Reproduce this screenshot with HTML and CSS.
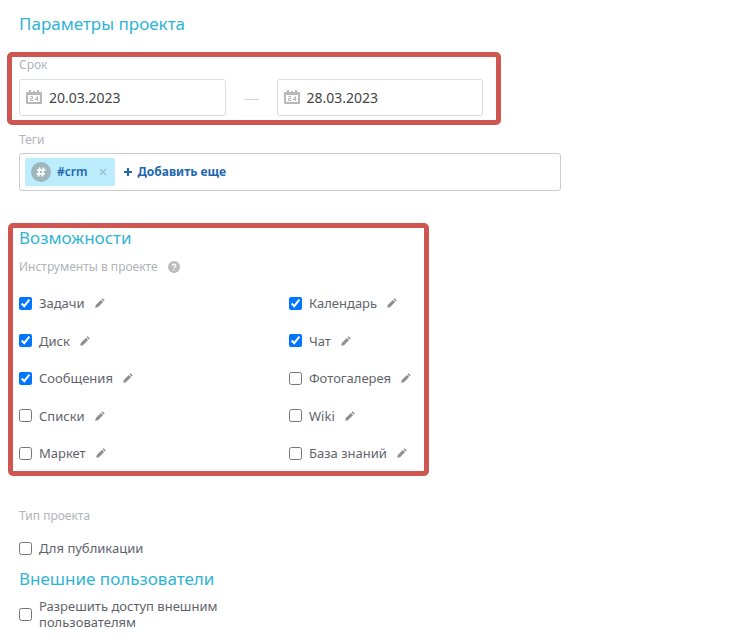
FILE: index.html
```html
<!DOCTYPE html>
<html lang="ru">
<head>
<meta charset="utf-8">
<title>Параметры проекта</title>
<meta name="viewport" content="width=device-width, initial-scale=1">
<link rel="stylesheet" href="styles.css">
</head>
<body>
<svg class="defs" aria-hidden="true">
  <symbol id="pencil" viewBox="0 0 10 10">
    <path d="M7.600 .3 9.700 2.400 8.700 3.500 6.500 1.300zM5.900 1.900 8.100 4.100 3 9.200 .2 9.800 .8 7z"/>
  </symbol>
  <symbol id="calendar" viewBox="0 0 16 15">
    <path fill-rule="evenodd" d="M1 2h14a1 1 0 0 1 1 1v10a1 1 0 0 1-1 1H1a1 1 0 0 1-1-1V3a1 1 0 0 1 1-1zM2 5v7h12V5z"/>
    <path d="M3 0h2v3H3zM11 0h2v3h-2zM7 1h2v2H7z"/>
    <path fill="none" stroke="currentColor" d="M4.500 6.500h2v2h-2v2h3M11.500 11V6.500L9 9.500h3.500"/>
  </symbol>
</svg>
<form class="page">
  <h2 class="title">Параметры проекта</h2>

  <section class="frame frame-dates">
    <label class="caption" for="start">Срок</label>
    <div class="dates">
      <div class="date">
        <svg class="date-icon" aria-hidden="true"><use href="#calendar"/></svg>
        <input id="start" type="text" value="20.03.2023">
      </div>
      <span class="dash"></span>
      <div class="date">
        <svg class="date-icon" aria-hidden="true"><use href="#calendar"/></svg>
        <input type="text" value="28.03.2023" aria-label="Срок, окончание">
      </div>
    </div>
  </section>

  <section class="tags">
    <div class="caption">Теги</div>
    <div class="tag-box">
      <span class="tag">
        <svg class="tag-icon" viewBox="0 0 20 20" aria-hidden="true">
          <circle cx="10" cy="10" r="10" fill="#9fb6bd"/>
          <path d="M8.800 5.500 7.500 14.500M12.500 5.500 11.200 14.500M6 8.200h8.500M5.500 11.800h8.500" fill="none" stroke="#fff" stroke-width="1.800"/>
        </svg>
        <span>#crm</span>
        <button class="remove" type="button" aria-label="Удалить">
          <svg viewBox="0 0 8 8" aria-hidden="true"><path d="M1 1l6 6M7 1 1 7" stroke="#9ac3cf" stroke-width="1.500"/></svg>
        </button>
      </span>
      <button class="add" type="button">
        <svg viewBox="0 0 8 8" aria-hidden="true"><path d="M4 0v8M0 4h8" stroke="currentColor" stroke-width="2"/></svg>
        Добавить еще
      </button>
    </div>
  </section>

  <section class="frame frame-tools">
    <h2 class="title">Возможности</h2>
    <div class="caption with-help">
      Инструменты в проекте
      <svg class="help" viewBox="0 0 12 12" aria-hidden="true">
        <circle cx="6" cy="6" r="6" fill="#bcbcbc"/>
        <path d="M4.200 4.700C4.300 2.600 7.800 2.600 7.800 4.600 7.800 5.800 6 5.800 6 7.300M6 8.200v1.400" fill="none" stroke="#fff" stroke-width="1.400"/>
      </svg>
    </div>
    <div class="tools">
      <div class="tool"><label class="check"><input type="checkbox" checked>Задачи</label><button class="edit" type="button" aria-label="Изменить"><svg><use href="#pencil"/></svg></button></div>
      <div class="tool"><label class="check"><input type="checkbox" checked>Календарь</label><button class="edit" type="button" aria-label="Изменить"><svg><use href="#pencil"/></svg></button></div>
      <div class="tool"><label class="check"><input type="checkbox" checked>Диск</label><button class="edit" type="button" aria-label="Изменить"><svg><use href="#pencil"/></svg></button></div>
      <div class="tool"><label class="check"><input type="checkbox" checked>Чат</label><button class="edit" type="button" aria-label="Изменить"><svg><use href="#pencil"/></svg></button></div>
      <div class="tool"><label class="check"><input type="checkbox" checked>Сообщения</label><button class="edit" type="button" aria-label="Изменить"><svg><use href="#pencil"/></svg></button></div>
      <div class="tool"><label class="check"><input type="checkbox">Фотогалерея</label><button class="edit" type="button" aria-label="Изменить"><svg><use href="#pencil"/></svg></button></div>
      <div class="tool"><label class="check"><input type="checkbox">Списки</label><button class="edit" type="button" aria-label="Изменить"><svg><use href="#pencil"/></svg></button></div>
      <div class="tool"><label class="check"><input type="checkbox">Wiki</label><button class="edit" type="button" aria-label="Изменить"><svg><use href="#pencil"/></svg></button></div>
      <div class="tool"><label class="check"><input type="checkbox">Маркет</label><button class="edit" type="button" aria-label="Изменить"><svg><use href="#pencil"/></svg></button></div>
      <div class="tool"><label class="check"><input type="checkbox">База знаний</label><button class="edit" type="button" aria-label="Изменить"><svg><use href="#pencil"/></svg></button></div>
    </div>
  </section>

  <section class="extra">
    <div class="caption">Тип проекта</div>
    <label class="check publish"><input type="checkbox">Для публикации</label>
    <h2 class="title">Внешние пользователи</h2>
    <label class="check external"><input type="checkbox">Разрешить доступ внешним пользователям</label>
  </section>
</form>
</body>
</html>
```
FILE: styles.css
```css
* {
  box-sizing: border-box;
}

body {
  margin: 0;
  background: #fff;
  color: #5f646b;
  font: 13px/16px "Noto Sans", "Open Sans", sans-serif;
}

button {
  padding: 0;
  border: 0;
  background: none;
  font: inherit;
  cursor: pointer;
}

.defs {
  display: none;
}

.page {
  padding: 12px 0 8px;
}

.title {
  margin: 0;
  color: #2fb4d5;
  font-size: 17px;
  font-weight: 400;
  line-height: 24px;
}

.page > .title,
.tags,
.extra {
  padding-left: 19px;
}

.caption {
  display: block;
  color: #b0b3b7;
  font-size: 12px;
  line-height: 16px;
}

/* Highlighted groups */
.frame {
  border: 5px solid #cf5650;
  border-radius: 5px;
}

.frame-dates {
  max-width: 494px;
  margin: 16px 0 0 7px;
  padding: 0 13px 4px 7px;
}

.dates {
  display: flex;
  align-items: center;
  margin-top: 6px;
}

.date {
  display: flex;
  flex: 1;
  align-items: center;
  gap: 7px;
  height: 37px;
  padding: 0 6px;
  border: 1px solid #dcdddf;
  border-radius: 3px;
}

.date-icon {
  flex: none;
  width: 16px;
  height: 15px;
  color: #b8b8b8;
  fill: currentColor;
}

.date input {
  width: 100%;
  min-width: 0;
  padding: 0;
  border: 0;
  outline: 0;
  background: none;
  color: #444;
  font: 14px/20px "Noto Sans", sans-serif;
}

.dash {
  width: 15px;
  margin: 4px 18px 0;
  border-top: 1px solid #d4d4d4;
}

/* Tags */
.tags {
  max-width: 561px;
  margin-top: 7px;
}

.tag-box {
  display: flex;
  align-items: center;
  gap: 9px;
  height: 38px;
  margin-top: 5px;
  padding: 0 5px;
  border: 1px solid #c9cccf;
  border-radius: 3px;
}

.tag {
  display: flex;
  align-items: center;
  height: 28px;
  padding: 0 8px 0 6px;
  border-radius: 2px;
  background: #bcedfc;
  color: #2067b0;
  font-size: 12px;
  font-weight: 600;
}

.tag-icon {
  width: 20px;
  height: 20px;
  margin-right: 6px;
}

.remove {
  display: flex;
  margin-left: 11px;
}

.remove svg,
.add svg {
  width: 8px;
  height: 8px;
}

.add {
  display: flex;
  align-items: center;
  gap: 6px;
  color: #2067b0;
  font-size: 12px;
  font-weight: 700;
}

/* Project tools */
.frame-tools {
  max-width: 421px;
  margin: 32px 0 0 8px;
  padding: 0 6px 6px;
}

.frame-tools .title {
  line-height: 20px;
}

.with-help {
  display: flex;
  align-items: center;
  gap: 10px;
  margin-top: 11px;
}

.help {
  width: 12px;
  height: 12px;
}

.tools {
  display: grid;
  grid-template-columns: 270px 1fr;
  grid-auto-rows: 24px;
  align-content: space-between;
  height: 174px;
  margin-top: 16px;
}

.tool {
  display: flex;
  align-items: center;
  gap: 10px;
  white-space: nowrap;
}

.check {
  display: flex;
  align-items: center;
  gap: 7px;
}

.check input {
  flex: none;
  width: 13px;
  height: 13px;
  margin: 0;
}

.edit svg {
  display: block;
  width: 10px;
  height: 10px;
  fill: #8e8e8e;
}

/* Project type and guests */
.extra {
  margin-top: 32px;
}

.publish {
  margin: 16px 0 11px;
}

.external {
  max-width: 210px;
  margin-top: 7px;
}
```
